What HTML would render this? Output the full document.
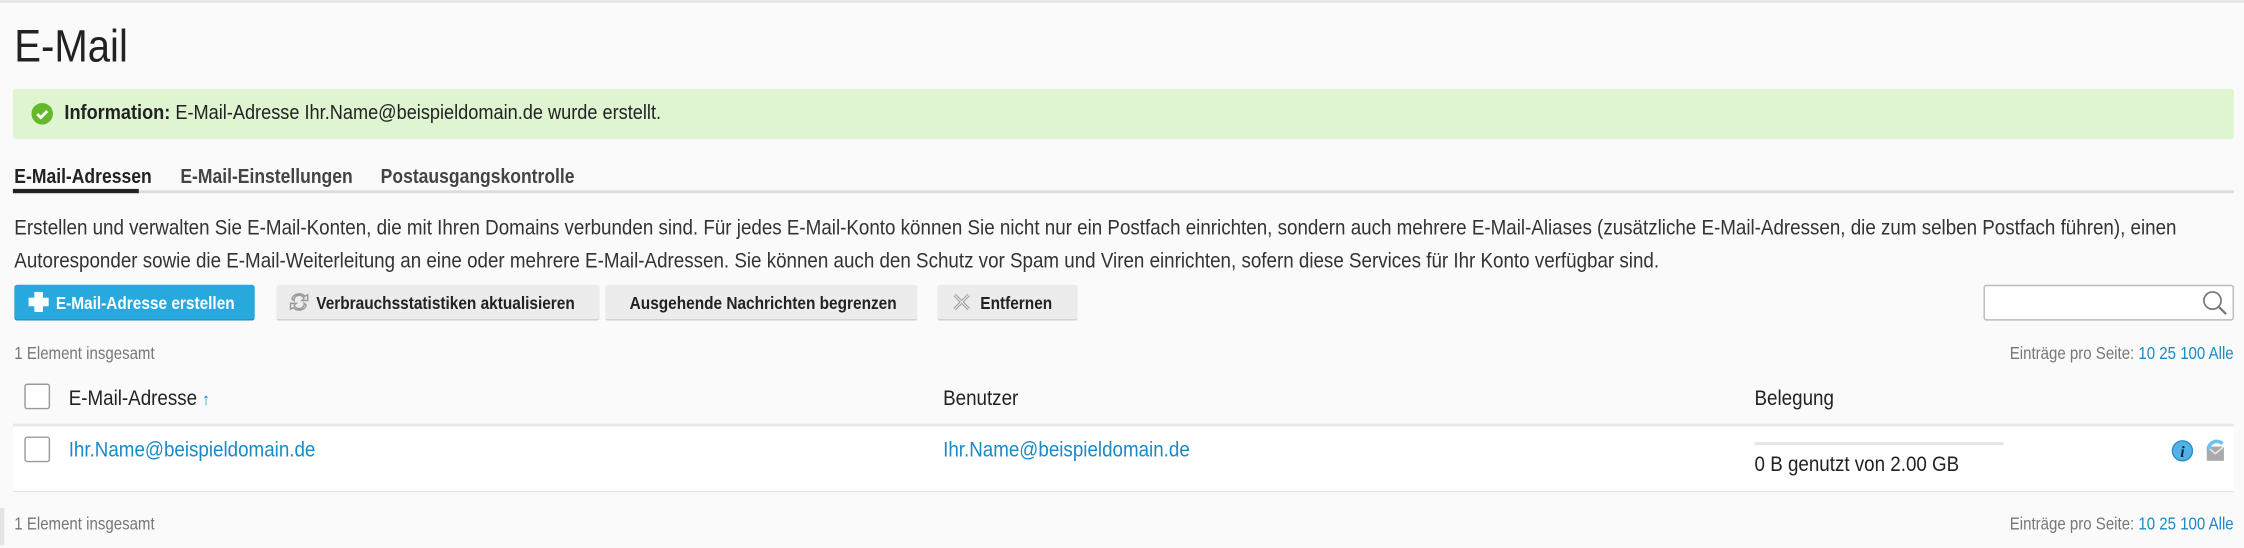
<!DOCTYPE html>
<html><head><meta charset="utf-8"><style>
body{margin:0;width:2244px;height:548px;background:#fafafa;font-family:"Liberation Sans",sans-serif;color:#222;position:relative;overflow:hidden}
#root{position:absolute;left:0;top:0;width:1568px;height:383px;transform:scale(1.4311);transform-origin:0 0}
.a{position:absolute;white-space:nowrap;transform:scaleX(.875);transform-origin:left center}
.r{position:absolute;white-space:nowrap;transform:scaleX(.875);transform-origin:right center}
.b{position:absolute;box-sizing:border-box;border-radius:2px}
.gbtn{background:#ececec;border-bottom:1px solid #cfcfcf;top:199px;height:25px}
.blue{color:#1a8ac6}
.cb{position:absolute;width:18px;height:18px;border:1px solid #999;border-radius:2px;background:#fff;box-sizing:border-box}
.bt{font-size:12.3px;font-weight:bold;top:205px}
</style></head><body><div id="root">
<div style="position:absolute;left:0;top:0;width:1568px;height:2px;background:#e6e6e6"></div>
<div class="a" style="left:10px;top:14px;font-size:32px;color:#222">E-Mail</div>

<div class="b" style="left:9px;top:62px;width:1552px;height:35px;background:#dff5d2"></div>
<svg style="position:absolute;left:22px;top:72px" width="15" height="15"><circle cx="7.5" cy="7.5" r="7.5" fill="#66b82b"/><path d="M4 7.7l2.5 2.5 4.5-4.6" stroke="#fff" stroke-width="2" fill="none"/></svg>
<div class="a" style="left:45px;top:71px;font-size:14.5px"><b>Information:</b> E-Mail-Adresse Ihr.Name@beispieldomain.de wurde erstellt.</div>

<div class="a" style="left:10px;top:115px;font-size:14px;font-weight:bold;color:#222">E-Mail-Adressen</div>
<div class="a" style="left:126px;top:115px;font-size:14px;font-weight:bold;color:#444">E-Mail-Einstellungen</div>
<div class="a" style="left:266px;top:115px;font-size:14px;font-weight:bold;color:#444">Postausgangskontrolle</div>
<div style="position:absolute;left:9px;top:133px;width:1552px;height:2px;background:#dcdcdc"></div>
<div style="position:absolute;left:9px;top:132px;width:88px;height:3px;background:#222"></div>

<div class="a" style="left:10px;top:148px;font-size:15px;line-height:23px;color:#333">Erstellen und verwalten Sie E-Mail-Konten, die mit Ihren Domains verbunden sind. Für jedes E-Mail-Konto können Sie nicht nur ein Postfach einrichten, sondern auch mehrere E-Mail-Aliases (zusätzliche E-Mail-Adressen, die zum selben Postfach führen), einen</div>
<div class="a" style="left:10px;top:171px;font-size:15px;line-height:23px;color:#333">Autoresponder sowie die E-Mail-Weiterleitung an eine oder mehrere E-Mail-Adressen. Sie können auch den Schutz vor Spam und Viren einrichten, sofern diese Services für Ihr Konto verfügbar sind.</div>

<div class="b" style="left:10px;top:199px;width:168px;height:25px;background:#28a9de;border-bottom:1px solid #1f8fc0"></div>
<div style="position:absolute;left:20px;top:204px;width:14px;height:14px">
<div style="position:absolute;left:4px;top:0;width:6px;height:14px;background:#fff"></div><div style="position:absolute;left:0;top:4px;width:14px;height:6px;background:#fff"></div></div>
<div class="a bt" style="left:39px;color:#fff">E-Mail-Adresse erstellen</div>

<div class="b gbtn" style="left:193px;width:226px"></div>
<svg style="position:absolute;left:202px;top:203px" width="14" height="16"><path d="M2 6a5 4 0 0 1 9-2l2-1v4h-4l1.5-1.2A3.5 3 0 0 0 3.5 7zM12 10a5 4 0 0 1-9 2l-2 1V9h4l-1.5 1.2A3.5 3 0 0 0 10.5 9z" fill="none" stroke="#999" stroke-width="1"/></svg>
<div class="a bt" style="left:221px">Verbrauchsstatistiken aktualisieren</div>

<div class="b gbtn" style="left:423px;width:218px"></div>
<div class="a bt" style="left:440px">Ausgehende Nachrichten begrenzen</div>

<div class="b gbtn" style="left:655px;width:98px"></div>
<svg style="position:absolute;left:665px;top:204px" width="14" height="14"><path d="M2 2l10 10M12 2L2 12" stroke="#999" stroke-width="2.2"/><path d="M2 2l10 10M12 2L2 12" stroke="#eee" stroke-width=".8"/></svg>
<div class="a bt" style="left:685px">Entfernen</div>

<div class="b" style="left:1386px;top:199px;width:175px;height:25px;background:#fff;border:1px solid #bbb"></div>
<svg style="position:absolute;left:1538px;top:202px" width="20" height="18"><circle cx="8" cy="8" r="6" fill="none" stroke="#777" stroke-width="1.2"/><path d="M12.5 12.5l5 5" stroke="#777" stroke-width="1.6"/></svg>

<div class="a" style="left:10px;top:240px;font-size:12px;color:#777">1 Element insgesamt</div>
<div class="r" style="right:7px;top:240px;font-size:12px;color:#777">Einträge pro Seite: <span class="blue">10 25 100 Alle</span></div>

<div class="cb" style="left:17px;top:268px"></div>
<div class="a" style="left:48px;top:270px;font-size:15px;color:#222">E-Mail-Adresse <span class="blue" style="font-size:12px">↑</span></div>
<div class="a" style="left:659px;top:270px;font-size:15px;color:#222">Benutzer</div>
<div class="a" style="left:1226px;top:270px;font-size:15px;color:#222">Belegung</div>
<div style="position:absolute;left:9px;top:296px;width:1552px;height:45px;background:#fff;border-top:2px solid #e8e8e8;border-bottom:1px solid #e6e6e6"></div>
<div class="cb" style="left:17px;top:305px"></div>
<div class="a blue" style="left:48px;top:306px;font-size:15px">Ihr.Name@beispieldomain.de</div>
<div class="a blue" style="left:659px;top:306px;font-size:15px">Ihr.Name@beispieldomain.de</div>
<div style="position:absolute;left:1226px;top:309px;width:174px;height:2px;background:#e4e4e4"></div>
<div class="a" style="left:1226px;top:316px;font-size:15px;color:#222">0 B genutzt von 2.00 GB</div>
<svg style="position:absolute;left:1517px;top:307px" width="16" height="16"><circle cx="8" cy="8" r="7" fill="#4fb3e8" stroke="#2e8fc8"/><text x="8" y="12.5" font-family="Liberation Serif" font-style="italic" font-weight="bold" font-size="11" fill="#123" text-anchor="middle">i</text></svg>
<svg style="position:absolute;left:1539px;top:306px" width="18" height="18"><rect x="3" y="6" width="12" height="10" fill="#aaa"/><path d="M3 6l6 5 6-5" stroke="#eee" fill="none"/><path d="M4 8A6 6 0 0 1 14 4" stroke="#6cc3ee" stroke-width="2.5" fill="none"/></svg>

<div style="position:absolute;left:0;top:355px;width:3px;height:26px;background:#e4e4e4"></div>
<div class="a" style="left:10px;top:359px;font-size:12px;color:#777">1 Element insgesamt</div>
<div class="r" style="right:7px;top:359px;font-size:12px;color:#777">Einträge pro Seite: <span class="blue">10 25 100 Alle</span></div>
</div></body></html>
